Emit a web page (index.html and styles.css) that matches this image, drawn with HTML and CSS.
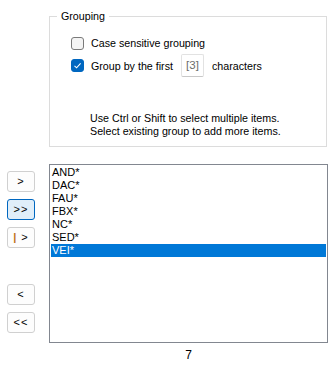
FILE: index.html
```html
<!DOCTYPE html>
<html lang="en">
<head>
    <meta charset="UTF-8">
    <meta name="viewport" content="width=device-width, initial-scale=1.0">
    <title>Grouping</title>
    <link rel="stylesheet" href="styles.css">
</head>
<body>
    <fieldset class="group">
        <legend>Grouping</legend>
        <div class="group-body">
            <label class="check-row first">
                <span class="box"></span>
                <span>Case sensitive grouping</span>
            </label>
            <label class="check-row">
                <span class="box checked">
                    <svg width="13" height="13" viewBox="0 0 13 13"><path d="M3.5 6.8 L5.6 8.8 L9.6 4.4" fill="none" stroke="#fff" stroke-width="1.1"/></svg>
                </span>
                <span>Group by the first</span>
                <span class="num">[3]</span>
                <span>characters</span>
            </label>
            <p class="hint">Use Ctrl or Shift to select multiple items.<br>Select existing group to add more items.</p>
        </div>
    </fieldset>

    <div class="picker">
        <div class="moves">
            <button class="move">&gt;</button>
            <button class="move active">&gt;&gt;</button>
            <button class="move"><span class="bar">|</span> &gt;</button>
            <button class="move back">&lt;</button>
            <button class="move">&lt;&lt;</button>
        </div>
        <div class="list-col">
            <ul class="list">
                <li>AND*</li>
                <li>DAC*</li>
                <li>FAU*</li>
                <li>FBX*</li>
                <li>NC*</li>
                <li>SED*</li>
                <li class="selected">VEI*</li>
            </ul>
            <div class="count">7</div>
        </div>
    </div>
</body>
</html>
```

FILE: styles.css
```css
body {
    margin: 0;
    padding: 9px 0 0;
    width: 336px;
    height: 368px;
    background: #fff;
    color: #000;
    font-family: "Liberation Sans", Arial, sans-serif;
    font-size: 11px;
    overflow: hidden;
}
.group {
    margin: 0 0 0 49px;
    padding: 0;
    width: 276px;
    min-width: 0;
    border: 1px solid #dcdcdc;
    font-size: 10.7px;
}
.group legend {
    margin-left: 7px;
    padding: 0 4px;
    height: 15px;
    line-height: 15px;
}
.group-body {
    padding: 8px 0 8px 21px;
}
.check-row {
    display: flex;
    align-items: center;
    height: 23px;
    gap: 7px;
}
.check-row.first {
    height: 22px;
}
.box {
    box-sizing: border-box;
    width: 13px;
    height: 13px;
    border: 1px solid #7a7a7a;
    border-radius: 3px;
    background: #f4f4f4;
    flex: none;
}
.box.checked {
    border-color: #0067c0;
    background: #0067c0;
}
.box svg {
    display: block;
    margin: -1px;
}
.num {
    box-sizing: border-box;
    width: 23px;
    height: 23px;
    margin: 0 1px;
    border: 1px solid #e2e2e2;
    border-bottom-color: #c8c8c8;
    border-radius: 2px;
    color: #6d6d6d;
    text-align: center;
    line-height: 20px;
    font-size: 11.5px;
}
.hint {
    margin: 35px 0 0 19px;
    line-height: 13px;
}
.picker {
    display: flex;
    margin-top: 17px;
}
.moves {
    width: 49px;
    display: flex;
    flex-direction: column;
    padding-top: 7px;
    gap: 7px;
}
.move {
    box-sizing: border-box;
    width: 28px;
    height: 21px;
    margin-left: 7px;
    padding: 0;
    border: 1px solid #d0d0d0;
    border-radius: 3px;
    background: #fdfdfd;
    color: #000;
    font-family: "Liberation Sans", Arial, sans-serif;
    font-size: 11px;
    letter-spacing: 1px;
    line-height: 19px;
}
.move.active {
    border-color: #0067c0;
    background: #e0eef9;
}
.move.back {
    margin-top: 29px;
}
.bar {
    color: #c0701c;
    font-weight: bold;
}
.list-col {
    width: 279px;
}
.list {
    box-sizing: border-box;
    height: 179px;
    margin: 0;
    padding: 1px;
    list-style: none;
    border: 1px solid #828790;
}
.list li {
    height: 13px;
    line-height: 13px;
    padding-left: 1px;
}
.list li.selected {
    background: #0078d7;
    color: #fff;
}
.count {
    margin-top: 5px;
    text-align: center;
    font-size: 12px;
    line-height: 14px;
}
```
